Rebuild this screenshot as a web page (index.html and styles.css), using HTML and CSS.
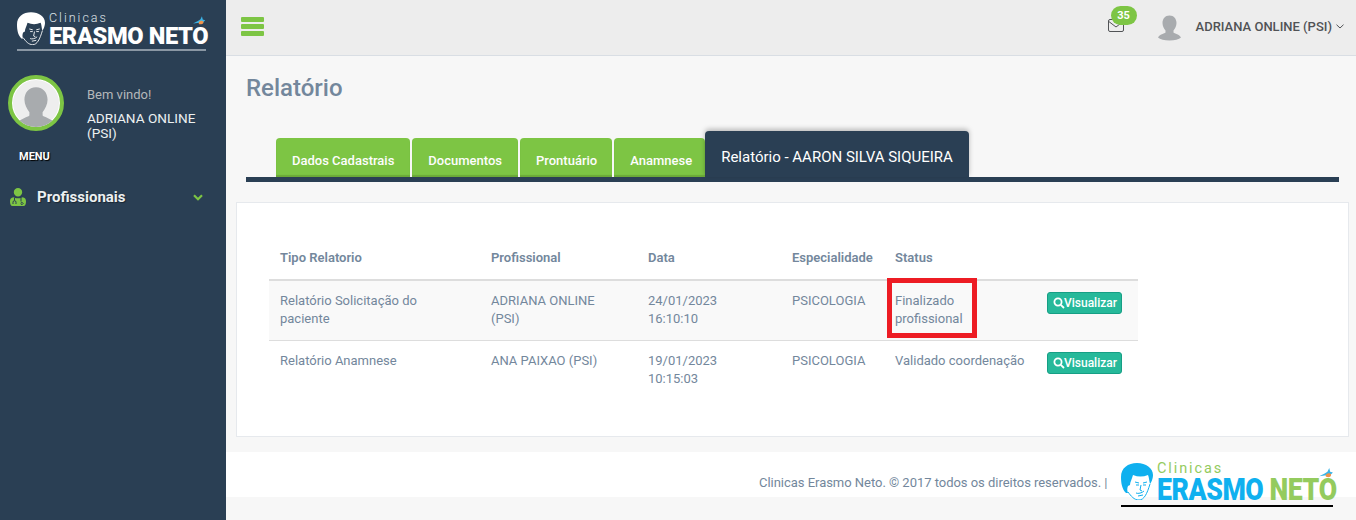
FILE: index.html
```html
<!DOCTYPE html>
<html lang="pt-BR">
<head>
<meta charset="utf-8">
<title>Relatório</title>
<link rel="stylesheet" href="styles.css">
</head>
<body>
<svg width="0" height="0" class="defs">
  <defs>
    <symbol id="face" viewBox="0 0 32 37">
      <path class="skin" d="M8 22c1-3 3-7 4-10 5 2 10 2 15 0 1 2 1 5 2 9 0 5-2 9-4 12-2 3-4 4-7 4-4 0-7-3-9-7-1-2-2-5-1-8z"/>
      <path class="hair" d="M5 30C1 26 0 20 0 14 0 5 7 0 16 0c9 0 16 5 16 12 0 4-2 8-3 9-1-4-1-7-2-9-5 2-10 2-15 0-1 4-3 7-3 10l-2 1c-1 2-1 5 0 7z"/>
      <path class="line" d="M7 29c3 4 6 8 11 8 5 0 8-6 11-16M14 19l4 1M22 20l4-1M15 22h3M22 22h3M20 22l-1 5 2 1M15 30c2 1 6 0 8-2M17 33l5-1"/>
    </symbol>
    <symbol id="bird" viewBox="0 0 16 12">
      <path class="bird-b" d="M0 9l6-3 3-2 2-4 1 4 3 1-3 3H8z"/>
      <path class="bird-o" d="M7 8c1-3 5-3 6-1 0 2-1 3-3 3S7 10 7 8z"/>
    </symbol>
    <symbol id="person" viewBox="0 0 46 50">
      <path d="M23 0c9 0 14 7 14 15 0 6-3 11-6 15v4c2 2 12 4 15 10-4 4-13 6-23 6S4 48 0 44c3-6 13-8 15-10v-4c-3-4-6-9-6-15C9 7 14 0 23 0z"/>
    </symbol>
  </defs>
</svg>
<div class="app">
  <aside class="sidebar">
    <div class="logo logo-side">
      <svg class="logo-face"><use href="#face"/></svg>
      <div class="logo-text">
        <span class="logo-top">Clinicas</span>
        <span class="logo-main">ERASMO NETO</span>
      </div>
      <svg class="logo-bird"><use href="#bird"/></svg>
    </div>
    <div class="profile">
      <div class="avatar"><svg class="avatar-person"><use href="#person"/></svg></div>
      <div class="welcome">
        <span class="welcome-hi">Bem vindo!</span>
        <span class="welcome-name">ADRIANA ONLINE (PSI)</span>
      </div>
    </div>
    <h3 class="menu-title">MENU</h3>
    <a class="menu-item">
      <svg class="menu-icon" viewBox="0 0 16 18"><path d="M8 0a4.200 4.200 0 1 1 0 8.400A4.200 4.200 0 0 1 8 0zM3.500 9.200c1 .6 2 1 4.500 1s3.500-.4 4.500-1C15 9.500 16 11 16 13.500c0 2.500-.8 4.500-2.500 4.500h-11C.8 18 0 16 0 13.500 0 11 1 9.500 3.500 9.200z"/><path class="menu-icon-cut" d="M4.500 10v2.500M3 16v-1.800a1.500 1.500 0 0 1 3 0V16M11 10v3.500M11 15.500a1 1 0 1 0 0-.1"/></svg>
      <span class="menu-label">Profissionais</span>
      <svg class="menu-chevron" viewBox="0 0 10 7"><path d="M1 1.200l4 4 4-4"/></svg>
    </a>
  </aside>
  <div class="main">
    <header class="topbar">
      <svg class="burger" viewBox="0 0 23 19"><rect width="23" height="5" rx="1"/><rect y="7" width="23" height="5" rx="1"/><rect y="14" width="23" height="5" rx="1"/></svg>
      <div class="topbar-right">
        <div class="mail">
          <svg class="mail-icon" viewBox="0 0 16 13"><rect x=".5" y=".5" width="15" height="12" rx="1.500"/><path d="M.8 2.500L8 8l7.200-5.500"/></svg>
          <span class="mail-badge">35</span>
        </div>
        <svg class="top-person"><use href="#person"/></svg>
        <span class="top-name">ADRIANA ONLINE (PSI)</span>
        <svg class="top-chevron" viewBox="0 0 8 5"><path d="M.5.700L4 4 7.500.700"/></svg>
      </div>
    </header>
    <div class="content">
      <h2 class="page-title">Relatório</h2>
      <ul class="tabs">
        <li class="tab">Dados Cadastrais</li>
        <li class="tab">Documentos</li>
        <li class="tab">Prontuário</li>
        <li class="tab">Anamnese</li>
        <li class="tab tab-active">Relatório - AARON SILVA SIQUEIRA</li>
      </ul>
      <section class="panel">
        <table class="report">
          <colgroup>
            <col class="c1"><col class="c2"><col class="c3"><col class="c4"><col class="c5"><col class="c6">
          </colgroup>
          <thead>
            <tr><th>Tipo Relatorio</th><th>Profissional</th><th>Data</th><th>Especialidade</th><th>Status</th><th></th></tr>
          </thead>
          <tbody>
            <tr class="odd">
              <td>Relatório Solicitação do paciente</td>
              <td>ADRIANA ONLINE (PSI)</td>
              <td>24/01/2023 16:10:10</td>
              <td>PSICOLOGIA</td>
              <td class="status">Finalizado profissional<span class="highlight"></span></td>
              <td><a class="btn"><svg class="btn-icon" viewBox="0 0 12 12"><circle cx="5" cy="5" r="3.600"/><path d="M7.800 7.800L11 11"/></svg>Visualizar</a></td>
            </tr>
            <tr>
              <td>Relatório Anamnese</td>
              <td>ANA PAIXAO (PSI)</td>
              <td>19/01/2023 10:15:03</td>
              <td>PSICOLOGIA</td>
              <td>Validado coordenação</td>
              <td><a class="btn"><svg class="btn-icon" viewBox="0 0 12 12"><circle cx="5" cy="5" r="3.600"/><path d="M7.800 7.800L11 11"/></svg>Visualizar</a></td>
            </tr>
          </tbody>
        </table>
      </section>
    </div>
    <footer class="footer">
      <span class="footer-text">Clinicas Erasmo Neto. © 2017 todos os direitos reservados. |</span>
      <div class="logo logo-foot">
        <svg class="logo-face"><use href="#face"/></svg>
        <div class="logo-text">
          <span class="logo-top">Clinicas</span>
          <span class="logo-main">ERASMO <em>NETO</em></span>
        </div>
        <svg class="logo-bird"><use href="#bird"/></svg>
      </div>
    </footer>
  </div>
</div>
</body>
</html>
```
FILE: styles.css
```css
* { box-sizing: border-box; }
html, body { margin: 0; height: 520px; overflow: hidden; }
body { font: 13px/18px Roboto, "Liberation Sans", sans-serif; color: #73879c; background: #f7f7f7; }
.defs { position: absolute; }
.app { display: flex; height: 520px; }

/* logo */
.logo { position: relative; display: flex; flex: none; }
.logo-face { flex: none; display: block; }
.logo-text { display: flex; flex-direction: column; white-space: nowrap; }
.logo-top { display: block; font-weight: 400; }
.logo-main { display: block; font-weight: 900; transform-origin: 0 0; }
.logo-main em { font-style: normal; color: #94cb5e; }
.logo-bird { position: absolute; display: block; }
.hair { fill: var(--hair); }
.skin { fill: var(--skin); }
.line { fill: none; stroke: var(--ink); stroke-width: 1; }
.bird-b { fill: #3ab4e8; }
.bird-o { fill: #f0934a; }

.logo-side { --hair: #fff; --skin: #2a3f54; --ink: #fff; width: 189px; height: 37px; margin: 12px 0 0 17px; border-bottom: 2px solid #8a97a4; box-sizing: content-box; color: #fff; }
.logo-side .logo-face { width: 28px; height: 33px; }
.logo-side .logo-text { margin-left: 4px; }
.logo-side .logo-top { font-size: 12.500px; line-height: 10px; color: #dfe3e7; font-weight: 300; margin-top: 1px; letter-spacing: 2px; }
.logo-side .logo-main { font-size: 24.500px; line-height: 22px; letter-spacing: -.4px; margin-top: 2px; transform: scaleX(.965); }
.logo-side .logo-bird { width: 13px; height: 10px; left: 176px; top: 4px; }

.logo-foot { --hair: #0fb0ef; --skin: #fff; --ink: #0fb0ef; width: 212px; height: 43px; border-bottom: 2px solid #000; box-sizing: content-box; position: absolute; left: 895px; top: 10px; }
.logo-foot .logo-face { width: 32px; height: 37px; margin-top: 1px; }
.logo-foot .logo-text { margin-left: 4px; }
.logo-foot .logo-top { font-size: 14.500px; line-height: 11px; color: #94cb5e; margin-top: 1px; letter-spacing: 1.900px; }
.logo-foot .logo-main { font-size: 31px; line-height: 24px; color: #0fb0ef; letter-spacing: -.5px; margin-top: 4px; transform: scaleX(.86); }
.logo-foot .logo-bird { width: 17px; height: 11px; left: 197px; top: 6px; }

/* sidebar */
.sidebar { width: 226px; flex: none; background: #2a3f54; color: #ecf0f1; }
.profile { display: flex; margin: 24px 0 0 8px; height: 66px; }
.avatar { width: 56px; height: 56px; flex: none; border-radius: 50%; border: 4px solid #7dc544; background: #eee; box-shadow: inset 0 0 0 1px #fff; overflow: hidden; display: flex; justify-content: center; align-items: flex-end; }
.avatar-person { width: 38px; height: 42px; fill: #a8abae; display: block; margin-bottom: -2px; }
.welcome { margin: 11px 0 0 23px; width: 120px; }
.welcome-hi { display: block; color: #b5b8ba; line-height: 18px; }
.welcome-name { display: block; font-size: 13.600px; line-height: 15px; margin-top: 7px; color: #ecf0f1; }
.menu-title { margin: 9px 0 0 19px; font-size: 11px; line-height: 13px; font-weight: 700; color: #fff; text-shadow: 1px 1px 1px #000; }
.menu-item { display: flex; align-items: center; height: 20px; margin: 24px 0 0 10px; }
.menu-icon { width: 16px; height: 18px; fill: #7dc544; flex: none; }
.menu-icon-cut { fill: none; stroke: #2a3f54; stroke-width: 1; }
.menu-label { margin-left: 11px; font-size: 15px; font-weight: 700; color: #ecf0f1; text-shadow: 1px 1px 1px rgba(0,0,0,.4); width: 156px; }
.menu-chevron { width: 10px; height: 7px; fill: none; stroke: #7dc544; stroke-width: 2.200; flex: none; }

/* main */
.main { flex: 1; min-width: 0; display: flex; flex-direction: column; position: relative; }
.topbar { height: 56px; flex: none; display: flex; align-items: center; justify-content: space-between; background: #ededed; border-bottom: 1px solid #d9dee4; padding: 0 12px 0 15px; }
.burger { width: 23px; height: 19px; fill: #7dc544; display: block; margin-top: -3px; }
.topbar-right { display: flex; align-items: center; margin-top: -2px; }
.mail { position: relative; width: 16px; height: 13px; margin-top: -3px; }
.mail-icon { display: block; width: 16px; height: 13px; fill: none; stroke: #515356; stroke-width: 1; }
.mail-badge { position: absolute; left: 3px; top: -13px; width: 26px; height: 19px; border-radius: 10px; background: #7dc544; color: #fff; font-size: 11px; font-weight: 700; line-height: 19px; text-align: center; }
.top-person { width: 23px; height: 26px; fill: #a8abae; margin-left: 34px; margin-top: 2px; display: block; }
.top-name { margin-left: 15px; font-size: 13px; font-weight: 500; color: #515356; white-space: nowrap; }
.top-chevron { width: 8px; height: 5px; margin-left: 4px; fill: none; stroke: #515356; stroke-width: 1; }

.content { padding: 0 7px 0 10px; }
.page-title { margin: 18px 0 0 10px; font-size: 24px; line-height: 29px; font-weight: 500; color: #73879c; }
.tabs { list-style: none; margin: 28px 10px 0 10px; padding: 0 0 0 30px; display: flex; align-items: flex-end; border-bottom: 5px solid #2a3f54; height: 51px; }
.tab { height: 39px; margin-right: 2px; padding: 13px 16px 0; background: #7dc544; color: #fdfdfd; font-weight: 500; line-height: 20px; border-radius: 4px 4px 0 0; box-shadow: inset 0 -2px 1px #6ba938; white-space: nowrap; }
.tab:nth-child(3) { padding-right: 15px; }
.tab:nth-child(4) { margin-right: 0; padding-right: 13px; }
.tab-active { height: 46px; margin: 0; padding: 16px 16px 0; font-size: 15px; font-weight: 400; background: #2a3f54; color: #fff; box-shadow: 0 -2px 5px rgba(0,0,0,.25); }
.panel { margin-top: 20px; height: 235px; background: #fff; border: 1px solid #e6e9ed; padding: 36px 32px 0; }
.report { width: 869px; table-layout: fixed; border-collapse: collapse; }
.c1 { width: 211px; } .c2 { width: 157px; } .c3 { width: 144px; } .c4 { width: 103px; } .c5 { width: 152px; } .c6 { width: 102px; }
.report th { text-align: left; font-weight: 600; padding: 10px 11px 12px; border-bottom: 2px solid #ddd; white-space: nowrap; }
.report td { vertical-align: top; padding: 11px 11px 12px; border-bottom: 1px solid #ddd; }
.report tbody tr:last-child td { border-bottom: 0; }
.odd td { background: #f9f9f9; }
.report .status { position: relative; padding-right: 30px; }
.highlight { position: absolute; left: 3px; top: -3px; width: 90px; height: 60px; border: 5px solid #ed1c24; }
.btn { display: inline-flex; align-items: center; height: 22px; width: 75px; background: #26b99a; border: 1px solid #169f85; border-radius: 3px; color: #fff; font-size: 12px; font-weight: 500; padding: 0 0 0 5px; white-space: nowrap; }
.btn-icon { width: 12px; height: 12px; flex: none; fill: none; stroke: #fff; stroke-width: 1.800; margin-right: -1px; }

.footer { position: absolute; left: 0; right: 0; top: 452px; height: 45px; background: #fff; }
.footer-text { position: absolute; left: 533px; top: 22px; white-space: nowrap; letter-spacing: -.03px; }
```
